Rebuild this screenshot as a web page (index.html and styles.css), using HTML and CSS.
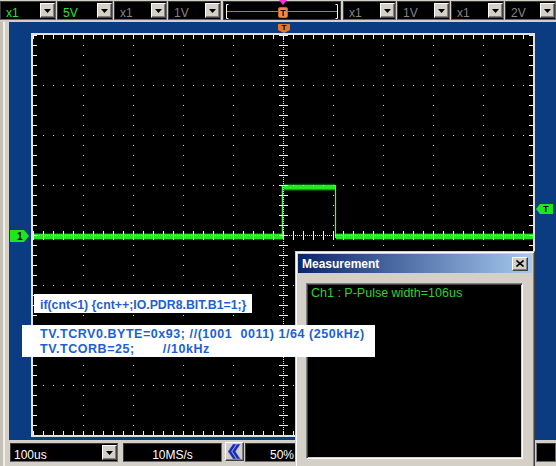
FILE: index.html
```html
<!DOCTYPE html>
<html>
<head>
<meta charset="utf-8">
<link rel="stylesheet" href="styles.css">
</head>
<body>
<div class="toolbar">
  <div class="combo w56 on"><span class="val">x1</span><span class="dd"></span></div>
  <div class="combo w56 on"><span class="val">5V</span><span class="dd"></span></div>
  <div class="combo w53"><span class="val">x1</span><span class="dd"></span></div>
  <div class="combo w53 gap2"><span class="val">1V</span><span class="dd"></span></div>
  <div class="trig">
    <svg width="116" height="17" viewBox="0 0 116 17">
      <path d="M4.5 2.5H2.5V16.5H4.5" stroke="#fff" fill="none"/>
      <path d="M111.5 2.5H113.5V16.5H111.5" stroke="#fff" fill="none"/>
      <path d="M3 9.5H113" stroke="#2fbf2f" fill="none"/>
      <polygon points="55,-2 63,-2 59,3" fill="#ff2ed0"/>
      <rect x="54.5" y="5.5" width="9" height="10" rx="1.5" fill="#f08a4a" stroke="#d0601c"/>
      <text x="59" y="14" text-anchor="middle" class="tt">T</text>
    </svg>
  </div>
  <div class="combo w53 gapl"><span class="val">x1</span><span class="dd"></span></div>
  <div class="combo w53"><span class="val">1V</span><span class="dd"></span></div>
  <div class="combo w53"><span class="val">x1</span><span class="dd"></span></div>
  <div class="combo w51"><span class="val">2V</span><span class="dd"></span></div>
</div>

<div class="main">
  <div class="edge"></div>
  <div class="scope">
    <div class="plot">
      <svg width="500" height="400" viewBox="0 0 500 400">
        <g fill="none" stroke="#22ea22">
          <path d="M0 201.5H250" stroke-width="7" stroke-opacity="0.35"/>
          <path d="M0 201.5H250" stroke-width="5"/>
          <path d="M249.5 203V150" stroke-width="1.5" stroke="#5cf05c"/>
          <path d="M250 152.2H302" stroke-width="7" stroke-opacity="0.35"/>
          <path d="M251 152.2H302" stroke-width="4.5"/>
          <path d="M302.5 150V203" stroke-width="1.2" stroke="#5cf05c"/>
          <path d="M303 201.5H500" stroke-width="7" stroke-opacity="0.35"/>
          <path d="M303 201.5H500" stroke-width="5"/>
        </g>
        <g fill="none" stroke="#d8d8d8" stroke-dasharray="1 9">
          <path d="M50.5 0V400M100.5 0V400M150.5 0V400M200.5 0V400M300.5 0V400M350.5 0V400M400.5 0V400M450.5 0V400"/>
          <path d="M0 50.5H500M0 100.5H500M0 150.5H500M0 250.5H500M0 300.5H500M0 350.5H500"/>
        </g>
        <g fill="none" stroke="#f4f4f4" stroke-dasharray="1 9">
          <path d="M0 2H500" stroke-width="4"/>
          <path d="M0 398H500" stroke-width="4"/>
          <path d="M2 0V400" stroke-width="4"/>
          <path d="M498 0V400" stroke-width="4"/>
          <path d="M250.5 0V400" stroke-width="9"/>
          <path d="M0 200.5H500" stroke-width="9"/>
        </g>
        <g fill="none" stroke="#e8e8e8" stroke-dasharray="1 1">
          <path d="M250.5 0V400"/>
          <path d="M0 200.5H500"/>
        </g>
      </svg>
    </div>
    <div class="mark m1"><span>1</span></div>
    <div class="mark mtr"><span>T</span></div>
    <div class="mark mtt"><span>T</span></div>
  </div>
</div>

<div class="bottombar">
  <div class="combo bf1"><span class="val wt">100us</span><span class="dd"></span></div>
  <div class="combo bf2"><span class="val wt">10MS/s</span></div>
  <div class="chev">
    <svg width="13" height="15" viewBox="0 0 13 15">
      <polygon points="5,0 8.5,0 3.5,7.5 8.5,15 5,15 0,7.5" fill="#1a2aa8" stroke="#8ea0ff" stroke-width="0.6"/>
      <polygon points="9,0 12.5,0 7.5,7.5 12.5,15 9,15 4,7.5" fill="#1a2aa8" stroke="#8ea0ff" stroke-width="0.6"/>
    </svg>
  </div>
  <div class="combo bf3"><span class="val wt">50%</span></div>
  <div class="combo bf4"></div>
</div>

<div class="win">
  <div class="title">
    <span class="title-text">Measurement</span>
    <span class="close">
      <svg width="8" height="7" viewBox="0 0 8 7"><path d="M0.5 0.5L7.5 6.5M7.5 0.5L0.5 6.5" stroke="#000" stroke-width="1.6"/></svg>
    </span>
  </div>
  <div class="panel">
    <div class="meas">Ch1 : P-Pulse width=106us</div>
  </div>
</div>

<div class="note note1">if(cnt&lt;1) {cnt++;IO.PDR8.BIT.B1=1;}</div>
<div class="note note2"><div class="line">TV.TCRV0.BYTE=0x93; //(1001  0011) 1/64 (250kHz)</div><div class="line">TV.TCORB=25;       //10kHz</div></div>
</body>
</html>
```

FILE: styles.css
```css
html, body {
  margin: 0;
  padding: 0;
}
body {
  width: 556px;
  height: 466px;
  overflow: hidden;
  position: relative;
  background: #d4d0c8;
  font-family: "Liberation Sans", Arial, sans-serif;
}

/* ---------- top toolbar ---------- */
.toolbar {
  display: flex;
  height: 22px;
  padding-top: 1px;
  box-sizing: border-box;
}
.combo {
  height: 19px;
  box-sizing: border-box;
  background: #000;
  border: 1px solid #3a3a3a;
  border-right-color: #6a6a6a;
  border-bottom-color: #6a6a6a;
  display: flex;
  align-items: center;
  justify-content: space-between;
  margin-right: 1px;
  flex: none;
}
.w56 { width: 56px; }
.w53 { width: 53px; }
.w51 { width: 51px; }
.gap2 { margin-right: 2px; }
.gapl { margin-left: 1px; }
.val {
  font-size: 12px;
  color: #858585;
  padding-left: 5px;
  padding-top: 4px;
  white-space: nowrap;
}
.combo.on .val { color: #2ee02e; }
.val.wt { color: #fff; }
.dd {
  width: 15px;
  height: 15px;
  box-sizing: border-box;
  background: #d4d0c8;
  border: 1px solid;
  border-color: #fff #404040 #404040 #fff;
  box-shadow: inset -1px -1px #808080;
  display: flex;
  align-items: center;
  justify-content: center;
  flex: none;
}
.dd::after {
  content: "";
  width: 7px;
  height: 4px;
  background: #000;
  clip-path: polygon(0 0, 100% 0, 50% 100%);
  margin-top: 1px;
}
.trig {
  width: 118px;
  height: 19px;
  box-sizing: border-box;
  background: #000;
  border: 1px solid #3a3a3a;
  margin-right: 1px;
  flex: none;
}
.trig svg { display: block; overflow: visible; }
.tt {
  font: bold 9px "Liberation Sans", Arial, sans-serif;
  fill: #1a0a00;
}

/* ---------- scope area ---------- */
.main {
  display: flex;
  height: 418px;
}
.edge {
  width: 9px;
  flex: none;
  background: linear-gradient(90deg, #c4c0b8 0 3px, #f2eee6 3px 5px, #d4d0c8 5px);
}
.scope {
  flex: 1;
  position: relative;
  background: #0b3b80;
  padding: 11px 21px 3px 22px;
  box-sizing: border-box;
}
.plot {
  width: 500px;
  height: 400px;
  border: 2px solid #e2e2e2;
  background: #000;
}
.plot svg { display: block; }

.mark {
  position: absolute;
  display: flex;
  align-items: center;
  font: bold 10px "Liberation Sans", Arial, sans-serif;
  color: #000;
}
.m1 {
  left: 1px;
  top: 208px;
  width: 19px;
  height: 12px;
  background: #1ee61e;
  clip-path: polygon(0 0, 14px 0, 19px 6px, 14px 12px, 0 12px);
  padding-left: 7px;
  box-sizing: border-box;
}
.mtr {
  left: 527px;
  top: 182px;
  width: 17px;
  height: 10px;
  background: #1ee61e;
  clip-path: polygon(4px 0, 17px 0, 17px 10px, 4px 10px, 0 5px);
  padding-left: 7px;
  box-sizing: border-box;
  font-size: 9px;
}
.mtt {
  left: 269px;
  top: 2px;
  width: 12px;
  height: 9px;
  background: #e8742a;
  clip-path: polygon(0 0, 12px 0, 12px 6px, 6px 9px, 0 6px);
  justify-content: center;
  align-items: flex-start;
  font-size: 8px;
  line-height: 8px;
}

/* ---------- bottom bar ---------- */
.bottombar {
  display: flex;
  height: 26px;
  padding: 3px 0 0 10px;
  box-sizing: border-box;
  background: linear-gradient(90deg, #c4c0b8 0 3px, #f2eee6 3px 5px, #d4d0c8 5px);
}
.bf1 { width: 108px; }
.bf1 .val { padding-left: 3px; }
.bf2 { width: 99px; margin-left: 4px; justify-content: center; }
.bf2 .val { padding-left: 0; }
.chev {
  width: 19px;
  height: 19px;
  box-sizing: border-box;
  margin-left: 2px;
  margin-top: -1px;
  background: #d4d0c8;
  border: 1px solid;
  border-color: #fff #404040 #404040 #fff;
  box-shadow: inset -1px -1px #808080;
  display: flex;
  align-items: center;
  justify-content: center;
  flex: none;
}
.chev svg { display: block; }
.bf3 { width: 52px; margin-left: 1px; justify-content: flex-end; }
.bf3 .val { padding-right: 2px; }
.bf4 { width: 20px; margin-left: auto; margin-right: 0; border-left-color: #808080; }

/* ---------- overlay notes ---------- */
.note {
  position: absolute;
  background: #fff;
  color: #1c5fd6;
  font: bold 12.3px "Liberation Sans", Arial, sans-serif;
  white-space: pre;
  box-sizing: border-box;
}
.note1 {
  left: 34px;
  top: 294px;
  width: 218px;
  height: 19px;
  padding: 4px 0 0 6px;
  line-height: 14px;
}
.note2 {
  left: 22px;
  top: 325px;
  width: 353px;
  height: 32px;
  padding: 2px 0 0 18px;
  font-size: 12.5px;
  letter-spacing: 0.55px;
  line-height: 14.5px;
}
.line { white-space: pre; }

/* ---------- measurement window ---------- */
.win {
  position: absolute;
  left: 295px;
  top: 251px;
  width: 240px;
  height: 230px;
  box-sizing: border-box;
  background: #d4d0c8;
  border: 1px solid;
  border-color: #d4d0c8 #404040 #404040 #d4d0c8;
  box-shadow: inset 1px 1px #fff, inset -1px -1px #808080;
  padding: 2px;
}
.title {
  height: 19px;
  background: linear-gradient(90deg, #0a246a, #a6caf0);
  display: flex;
  align-items: center;
  justify-content: space-between;
  padding: 0 4px 0 4px;
}
.title-text {
  color: #fff;
  font: bold 12px "Liberation Sans", Arial, sans-serif;
}
.close {
  width: 16px;
  height: 14px;
  box-sizing: border-box;
  background: #d4d0c8;
  border: 1px solid;
  border-color: #fff #404040 #404040 #fff;
  box-shadow: inset -1px -1px #808080;
  display: flex;
  align-items: center;
  justify-content: center;
}
.close svg { display: block; }
.panel {
  margin: 10px 9px 0 8px;
  height: 176px;
  box-sizing: border-box;
  background: #000;
  border: 1px solid;
  border-color: #808080 #fff #fff #808080;
  box-shadow: inset 1px 1px #404040, inset -1px -1px #d4d0c8;
  padding: 2px 0 0 4px;
}
.meas {
  color: #2fd02f;
  font: 12.5px "Liberation Sans", Arial, sans-serif;
}
```
